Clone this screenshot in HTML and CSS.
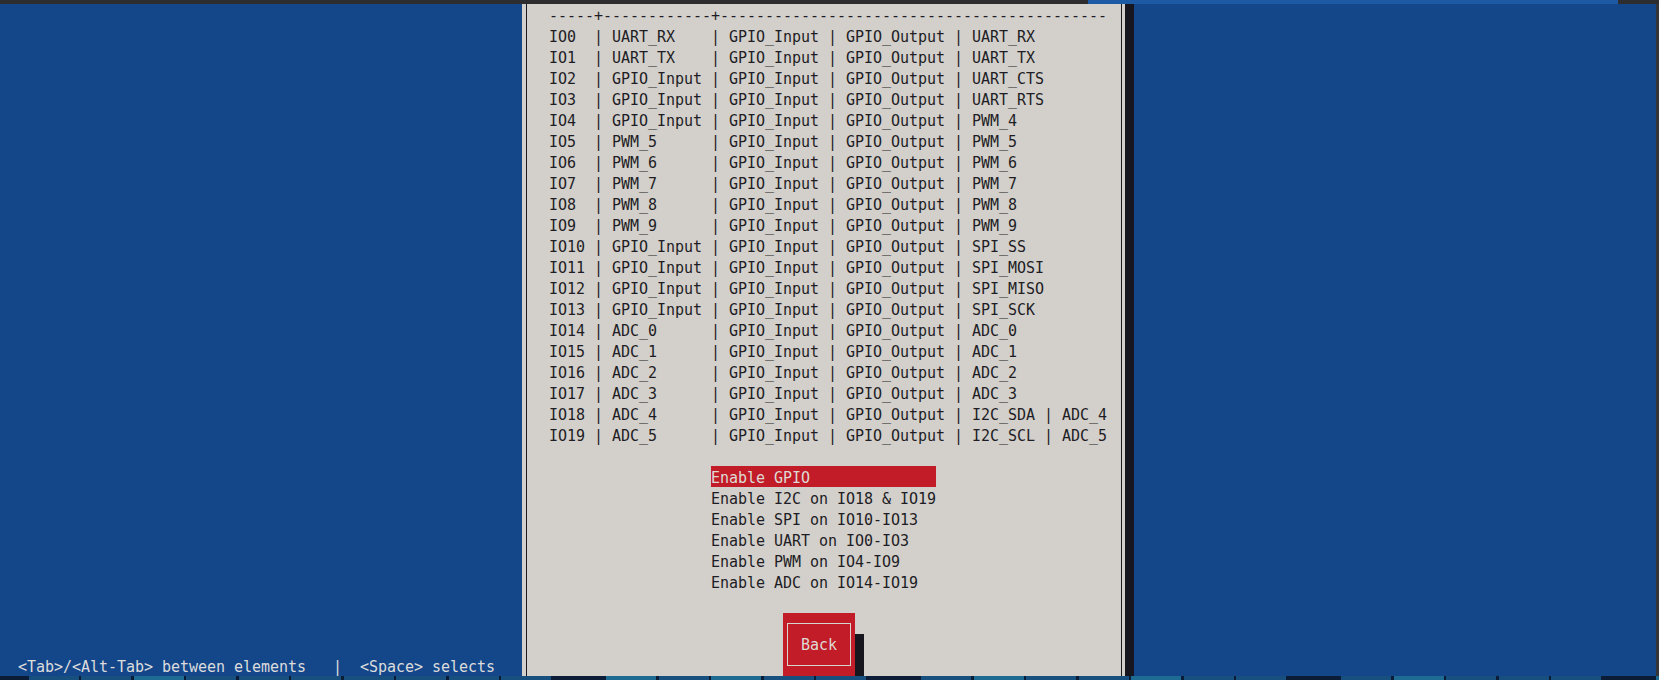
FILE: index.html
```html
<!DOCTYPE html>
<html>
<head>
<meta charset="utf-8">
<title>Pin configuration</title>
<link rel="stylesheet" href="styles.css">
</head>
<body>
<div class="topbar">
  <div class="tb-dark tb-left"></div>
  <div class="tb-blue"></div>
  <div class="tb-dark tb-fill"></div>
</div>
<div class="screen">
  <div class="bg-left">
    <div class="help">&lt;Tab&gt;/&lt;Alt-Tab&gt; between elements   |  &lt;Space&gt; selects</div>
  </div>
  <div class="window">
    <div class="frame">
<pre class="table">-----+------------+-------------------------------------------
IO0  | UART_RX    | GPIO_Input | GPIO_Output | UART_RX
IO1  | UART_TX    | GPIO_Input | GPIO_Output | UART_TX
IO2  | GPIO_Input | GPIO_Input | GPIO_Output | UART_CTS
IO3  | GPIO_Input | GPIO_Input | GPIO_Output | UART_RTS
IO4  | GPIO_Input | GPIO_Input | GPIO_Output | PWM_4
IO5  | PWM_5      | GPIO_Input | GPIO_Output | PWM_5
IO6  | PWM_6      | GPIO_Input | GPIO_Output | PWM_6
IO7  | PWM_7      | GPIO_Input | GPIO_Output | PWM_7
IO8  | PWM_8      | GPIO_Input | GPIO_Output | PWM_8
IO9  | PWM_9      | GPIO_Input | GPIO_Output | PWM_9
IO10 | GPIO_Input | GPIO_Input | GPIO_Output | SPI_SS
IO11 | GPIO_Input | GPIO_Input | GPIO_Output | SPI_MOSI
IO12 | GPIO_Input | GPIO_Input | GPIO_Output | SPI_MISO
IO13 | GPIO_Input | GPIO_Input | GPIO_Output | SPI_SCK
IO14 | ADC_0      | GPIO_Input | GPIO_Output | ADC_0
IO15 | ADC_1      | GPIO_Input | GPIO_Output | ADC_1
IO16 | ADC_2      | GPIO_Input | GPIO_Output | ADC_2
IO17 | ADC_3      | GPIO_Input | GPIO_Output | ADC_3
IO18 | ADC_4      | GPIO_Input | GPIO_Output | I2C_SDA | ADC_4
IO19 | ADC_5      | GPIO_Input | GPIO_Output | I2C_SCL | ADC_5</pre>
      <ul class="menu">
        <li class="item sel">Enable GPIO</li>
        <li class="item">Enable I2C on IO18 &amp; IO19</li>
        <li class="item">Enable SPI on IO10-IO13</li>
        <li class="item">Enable UART on IO0-IO3</li>
        <li class="item">Enable PWM on IO4-IO9</li>
        <li class="item">Enable ADC on IO14-IO19</li>
      </ul>
      <div class="btn-row">
        <div class="btn"><div class="btn-box">Back</div></div>
        <div class="btn-shadow"></div>
      </div>
    </div>
  </div>
  <div class="win-shadow"></div>
  <div class="bg-right"></div>
  <div class="edge"></div>
</div>
<div class="strip">
  <div class="seg d w28"></div>
  <div class="seg"></div><div class="seg"></div><div class="seg t"></div><div class="seg"></div>
  <div class="seg"></div><div class="seg"></div><div class="seg"></div><div class="seg"></div>
  <div class="seg"></div><div class="seg"></div>
  <div class="seg d"></div>
  <div class="seg t"></div><div class="seg"></div><div class="seg t"></div><div class="seg"></div>
  <div class="seg"></div>
  <div class="seg d"></div>
  <div class="seg"></div><div class="seg t"></div><div class="seg"></div><div class="seg"></div>
  <div class="seg t"></div><div class="seg"></div><div class="seg"></div><div class="seg d"></div>
  <div class="seg"></div><div class="seg t"></div><div class="seg"></div><div class="seg"></div>
  <div class="seg"></div><div class="seg d"></div><div class="seg t"></div><div class="seg"></div>
</div>
</body>
</html>
```
FILE: styles.css
```css
html, body {
  margin: 0;
  padding: 0;
}
body {
  width: 1659px;
  height: 680px;
  overflow: hidden;
  background: #2d2d2f;
  font-family: "DejaVu Sans Mono", "Liberation Mono", monospace;
  font-size: 15px;
  letter-spacing: -0.03px;
  line-height: 21px;
}
.topbar {
  display: flex;
  height: 4px;
}
.tb-dark { background: #2d2d2f; }
.tb-left { width: 1088px; }
.tb-blue { width: 530px; background: #1c5aa6; }
.tb-fill { flex: 1; }

.screen {
  display: flex;
  height: 672px;
  overflow: hidden;
}
.bg-left {
  width: 522px;
  background: #14478a;
  display: flex;
  flex-direction: column;
  justify-content: flex-end;
}
.help {
  height: 21px;
  box-sizing: border-box;
  padding: 2px 0 0 18px;
  white-space: pre;
  color: #dcdcdc;
  overflow: hidden;
}
.window {
  width: 603px;
  background: #d3d0cb;
  display: flex;
}
.frame {
  flex: 1;
  margin: 0 3px 0 4px;
  border-left: 1px solid #1b1a22;
  border-right: 1px solid #1b1a22;
  padding-left: 22px;
  color: #1e1d25;
  display: flex;
  flex-direction: column;
}
.table {
  margin: 0;
  padding-top: 2px;
  font: inherit;
  line-height: 21px;
  white-space: pre;
}
.menu {
  list-style: none;
  margin: 19px 0 0 162px;
  padding: 0;
  width: 225px;
}
.item {
  height: 21px;
  box-sizing: border-box;
  padding-top: 2px;
  white-space: pre;
  overflow: hidden;
}
.item.sel {
  background: #c11c28;
  color: #dedad4;
}
.btn-row {
  display: flex;
  align-items: flex-start;
  margin: 21px 0 0 234px;
}
.btn {
  width: 72px;
  height: 63px;
  box-sizing: border-box;
  background: #c11c28;
  padding: 10px 4px 10px 4px;
}
.btn-box {
  height: 43px;
  box-sizing: border-box;
  padding-top: 2px;
  border: 1px solid #d8d4ce;
  color: #dedad4;
  display: flex;
  align-items: center;
  justify-content: center;
}
.btn-shadow {
  width: 9px;
  height: 42px;
  margin-top: 21px;
  background: #17161f;
}
.win-shadow {
  width: 9px;
  background: #17161f;
}
.bg-right {
  flex: 1;
  background: #14478a;
}
.edge {
  width: 3px;
  background: #353538;
}
.strip {
  display: flex;
  gap: 2.5px;
  height: 4px;
  overflow: hidden;
  background: #0b1d36;
}
.seg {
  flex: 0 0 50px;
  background: #17507e;
}
.seg.t { background: #1d6a93; }
.seg.d { background: #0b1d36; }
.seg.w28 { flex-basis: 26px; }
```
